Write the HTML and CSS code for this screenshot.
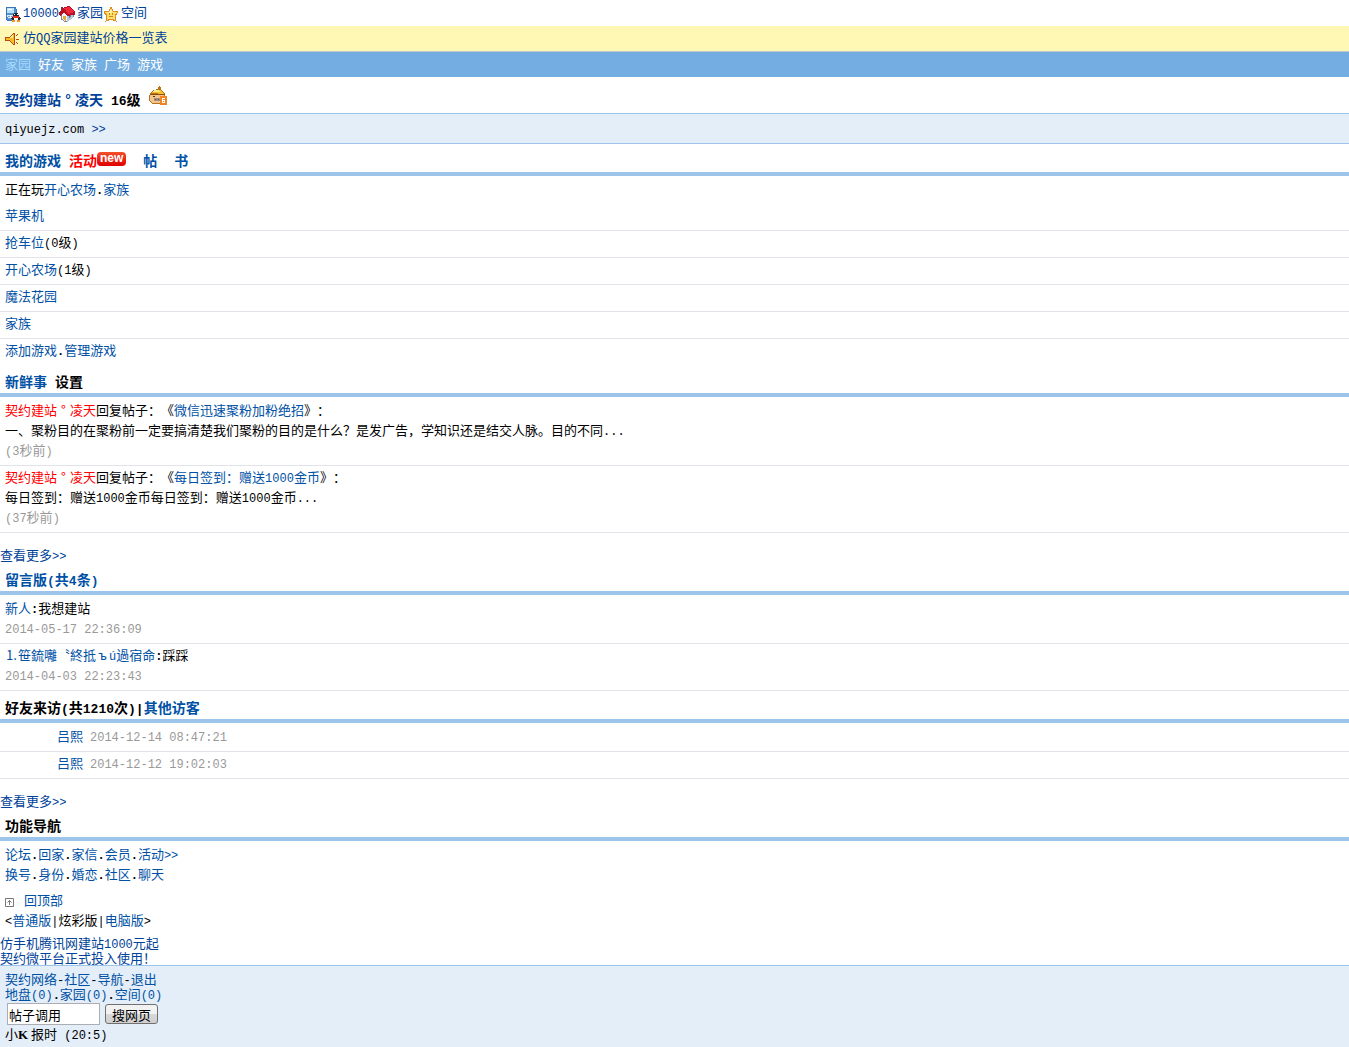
FILE: index.html
```html
<!DOCTYPE html>
<html lang="zh-CN">
<head>
<meta charset="utf-8">
<title>契约建站°凌天</title>
<link rel="stylesheet" href="styles.css">
</head>
<body>
<div class="top" id="top">
  <svg class="icon" viewBox="0 0 16 16" aria-hidden="true"><path d="M1 2l2-1h7l1 2v9l-1 2H2l-1-2z" fill="#4f93d2" stroke="#3c76b4"/><path d="M2 2h7v5H2z" fill="#b9e2fb"/><path d="M3 3h4v1H3z" fill="#fff"/><path d="M2 9h6v4H3z" fill="#e3effa"/><path d="M3 10h2v1H3zM6 10h2v1H6zM3 12h4v1H3z" fill="#6b9ed0"/><path d="M9 7h4l1 3 2 3-2 1-1 1H9l-1-1-2-1 2-3z" fill="#20242d"/><path d="M9 11h4v4H9z" fill="#fff"/><path d="M8 10h6v2H8z" fill="#ed2a1c"/><path d="M9 8h1v1H9zM12 8h1v1h-1z" fill="#fff"/><path d="M7 14h3v2H7zM12 14h3v2h-3z" fill="#ef9a25"/></svg>
  <a class="en" href="#">10000</a>
  <svg class="icon" viewBox="0 0 16 16" aria-hidden="true"><path d="M2 8l4-3 8 0v6l-7 5-5-3z" fill="#edf3fb" stroke="#7b8794"/><path d="M8 10l6-2v4l-6 4z" fill="#b9c6d8"/><path d="M4 10h3v5l-3-2z" fill="#e5a63a"/><path d="M10 10l2-1v2l-2 1z" fill="#557ba8"/><path d="M0 8V6l5-5 6-1 5 6v3l-2 0-6 1-3-4-4 4z" fill="#b80f22"/><path d="M5 2l4 6 6-2-5-5z" fill="#f0263a"/><path d="M2 1h2v3H2z" fill="#9c2332"/></svg>
  <a href="#">家园</a>
  <svg class="icon" viewBox="0 0 16 16" aria-hidden="true"><path d="M8 1l2 4 5 1-3 4 1 5-5-2-5 2 1-5-3-4 5-1z" fill="#ffdf68" stroke="#dd8b27"/><path d="M8 3l1 3-3 1-3 0 4-1z" fill="#fff7bb"/><path d="M6 7h1v2H6zM9 7h1v2H9zM6 10h4v1H6z" fill="#c98227"/></svg>
  <a href="#">空间</a>
</div>
<div class="notice">
  <svg class="icon" viewBox="0 0 16 16" aria-hidden="true"><path d="M.5 6.500h4l4-4h1v11h-1l-4-4h-4z" fill="#f5bd20" stroke="#b94a18"/><path d="M1 7h3l4-3v3z" fill="#fff09a"/><path d="M11 5l2-2M11 8h3M11 11l2 2" stroke="#b94a18" fill="none"/></svg>
  <a href="#">仿<span class="en">QQ</span>家园建站价格一览表</a>
</div>
<nav class="nav"><a class="current" href="#">家园</a><a href="#">好友</a><a href="#">家族</a><a href="#">广场</a><a href="#">游戏</a></nav>
<header class="profile">
  <a href="#">契约建站<span class="ring">°</span>凌天</a>
  <span><span class="en">16</span>级</span>
  <svg class="avatar" viewBox="0 0 18 19" aria-hidden="true"><path d="M1 8l3-4 5-1 1-3 2 1 0 3 4 4 0 8-3 2H4l-4-3V10z" fill="#b9711a"/><path d="M2 7l4-3h5l4 4z" fill="#f6bd2c"/><path d="M5 4l5 0 1 2H4z" fill="#ffec84"/><path d="M1 9h14v6l-3 2H4l-3-2z" fill="#f2c68a"/><path d="M1 8h15v1H1z" fill="#8d4f13"/><path d="M4 10h2v1H4zM11 10h2v1h-2z" fill="#4d3222"/><path d="M5 12h7v3H5z" fill="#a78b7e"/><path d="M6 13h1v1H6zM9 13h1v1H9z" fill="#614c49"/><path d="M11 10h7v9h-7z" fill="#f28422"/><path d="M13 12h3v1h-2v1h2v3h-3zM14 15v1h1v-1z" fill="#fff" fill-rule="evenodd"/></svg>
</header>
<div class="sign"><span class="en">qiyuejz.com <a href="#">&gt;&gt;</a></span></div>

<h2 class="title tabs"><a href="#">我的游戏</a><a class="hot" href="#">活动</a><span class="new">new</span><a class="tab" href="#">帖</a><a class="tab" href="#">书</a></h2>
<div class="list">
  <div class="row plain">正在玩<a href="#">开心农场</a><b class="en">.</b><a href="#">家族</a></div>
  <div class="row"><a href="#">苹果机</a></div>
  <div class="row"><a href="#">抢车位</a><span class="en">(0</span>级<span class="en">)</span></div>
  <div class="row"><a href="#">开心农场</a><span class="en">(1</span>级<span class="en">)</span></div>
  <div class="row"><a href="#">魔法花园</a></div>
  <div class="row"><a href="#">家族</a></div>
  <div class="row plain"><a href="#">添加游戏</a><b class="en">.</b><a href="#">管理游戏</a></div>
</div>

<h2 class="title tabs"><a href="#">新鲜事</a><span>设置</span></h2>
<div class="list">
  <div class="row"><a class="user" href="#">契约建站<span class="ring">°</span>凌天</a>回复帖子：《<a href="#">微信迅速聚粉加粉绝招</a>》：<br>一、聚粉目的在聚粉前一定要搞清楚我们聚粉的目的是什么？是发广告，学知识还是结交人脉。目的不同<span class="en">...</span><br><span class="time"><span class="en">(3</span>秒前<span class="en">)</span></span></div>
  <div class="row"><a class="user" href="#">契约建站<span class="ring">°</span>凌天</a>回复帖子：《<a href="#">每日签到：赠送<span class="en">1000</span>金币</a>》：<br>每日签到：赠送<span class="en">1000</span>金币每日签到：赠送<span class="en">1000</span>金币<span class="en">...</span><br><span class="time"><span class="en">(37</span>秒前<span class="en">)</span></span></div>
</div>
<div class="more"><a href="#">查看更多<span class="en">&gt;&gt;</span></a></div>

<h2 class="title"><a href="#">留言版<span class="en">(</span>共<span class="en">4</span>条<span class="en">)</span></a></h2>
<div class="list">
  <div class="row"><a href="#">新人</a><b class="en">:</b>我想建站<br><time class="time en">2014-05-17 22:36:09</time></div>
  <div class="row"><a href="#">⒈笹鋶囄〝終抵<span class="wide">ъ</span><span class="en">ú</span>過宿命</a><b class="en">:</b>踩踩<br><time class="time en">2014-04-03 22:23:43</time></div>
</div>

<h2 class="title">好友来访<span class="en">(</span>共<span class="en">1210</span>次<span class="en">)|</span><a href="#">其他访客</a></h2>
<div class="list">
  <div class="row visitor"><a href="#">吕熙</a><time class="time en">2014-12-14 08:47:21</time></div>
  <div class="row visitor"><a href="#">吕熙</a><time class="time en">2014-12-12 19:02:03</time></div>
</div>
<div class="more"><a href="#">查看更多<span class="en">&gt;&gt;</span></a></div>

<h2 class="title">功能导航</h2>
<div class="list">
  <div class="row plain"><a href="#">论坛</a><b class="en">.</b><a href="#">回家</a><b class="en">.</b><a href="#">家信</a><b class="en">.</b><a href="#">会员</a><b class="en">.</b><a href="#">活动<span class="en">&gt;&gt;</span></a><br><a href="#">换号</a><b class="en">.</b><a href="#">身份</a><b class="en">.</b><a href="#">婚恋</a><b class="en">.</b><a href="#">社区</a><b class="en">.</b><a href="#">聊天</a></div>
  <div class="row plain"><div class="totop"><svg class="up" viewBox="0 0 9 9" aria-hidden="true"><path d="M.5.5h8v8h-8zM4.500 7V2.500M2.500 4.500l2-2 2 2" fill="none" stroke="#777"/></svg><a href="#top">回顶部</a></div><span class="en">&lt;</span><a href="#">普通版</a><span class="en">|</span>炫彩版<span class="en">|</span><a href="#">电脑版</a><span class="en">&gt;</span></div>
</div>
<div class="ads"><a href="#">仿手机腾讯网建站<span class="en">1000</span>元起</a><br><a href="#">契约微平台正式投入使用！</a></div>

<footer class="footer">
  <div><a href="#">契约网络</a><span class="en">-</span><a href="#">社区</a><span class="en">-</span><a href="#">导航</a><span class="en">-</span><a href="#">退出</a></div>
  <div><a href="#">地盘<span class="en">(0)</span></a><b class="en">.</b><a href="#">家园<span class="en">(0)</span></a><b class="en">.</b><a href="#">空间<span class="en">(0)</span></a></div>
  <form class="search"><input type="text" aria-label="搜索" value="帖子调用"><button type="button">搜网页</button></form>
  <div class="clock">小<b class="k">K</b> 报时<span class="en"> (20:5)</span></div>
</footer>
</body>
</html>
```
FILE: styles.css
```css
body {
  margin: 0;
  min-height: 100vh;
  display: flex;
  flex-direction: column;
  background: #fff;
  color: #000;
  font: 13px/20px "Noto Sans CJK SC", sans-serif;
  text-spacing-trim: space-all;
}
a { color: #004299; text-decoration: none; }
.en { font-family: "Liberation Mono", monospace; font-size: 12px; line-height: 0; }
.ring, .wide { display: inline-block; width: 1em; text-align: center; }
.icon { width: 16px; height: 16px; flex: none; align-self: flex-end; }

.top { display: flex; align-items: baseline; padding: 2px 5px 4px; }
.top a { margin-left: 2px; }
.notice {
  display: flex;
  gap: 2px;
  padding: 1px 5px 4px;
  background: #fff8b5;
  border-bottom: 1px solid #c0c8c8;
}
.nav { display: flex; gap: 7px; padding: 2px 5px 3px; background: #73ade1; }
.nav a { color: #fff; }
.nav .current { color: #a5dbff; }

.profile {
  display: flex;
  gap: 8px;
  padding: 12px 5px 4px;
  font-size: 14px;
  font-weight: bold;
  line-height: 20px;
}
.profile .en, .title .en { font-size: 13px; }
.avatar { width: 18px; height: 19px; margin-top: -3px; }
.avatar, .icon { shape-rendering: crispEdges; }
.sign {
  padding: 4px 5px 5px;
  background: #e4eef8;
  border: solid #9dc5ec;
  border-width: 1px 0;
}

.title {
  margin: 0;
  padding: 6px 5px 2px;
  border-bottom: 4px solid #9dc5ec;
  font-size: 14px;
  line-height: 20px;
}
.title a, .list a, .footer a { color: #0051a5; }
.tabs { display: flex; gap: 8px; }
.title .hot, .list .user { color: #f00; }
.new {
  height: 14px;
  margin: 2px 0 0 -8px;
  padding: 0 3px;
  border-radius: 4px;
  background: linear-gradient(#f4502c, #e00000);
  color: #fff;
  font: bold 12px/12px "Liberation Sans", sans-serif;
}
.tab { margin-left: 9px; }

.list { padding-top: 2px; }
.row { padding: 1px 5px 5px; border-bottom: 1px solid #e1e3e9; }
.row.plain { border-bottom: 0; }
.time { color: #999; }
.visitor { display: flex; align-items: baseline; gap: 7px; padding-left: 57px; }
.more { padding: 14px 0 1px; line-height: 15px; }
.totop { display: flex; align-items: center; gap: 10px; }
.up { width: 9px; height: 9px; margin-top: 4px; }
.ads { line-height: 15px; }

.footer {
  flex: 1;
  padding: 5px 5px 4px;
  border-top: 1px solid #9dc5ec;
  background: #e4eef8;
  line-height: 15px;
}
.search { display: flex; align-items: center; gap: 5px; margin: 2px 2px 0; }
.search input {
  box-sizing: border-box;
  width: 93px;
  height: 22px;
  padding: 0 1px;
  border: 1px solid #abadb3;
  background: #fff;
  font: inherit;
}
.search button {
  box-sizing: border-box;
  width: 53px;
  height: 20px;
  padding: 0;
  border: 1px solid #707070;
  border-radius: 3px;
  background: linear-gradient(#f2f2f2 50%, #d8d8d8 50%, #cfcfcf);
  font: inherit;
}
.clock { line-height: 17px; }
.k { font: bold 13px/13px "Liberation Serif", serif; }
```
